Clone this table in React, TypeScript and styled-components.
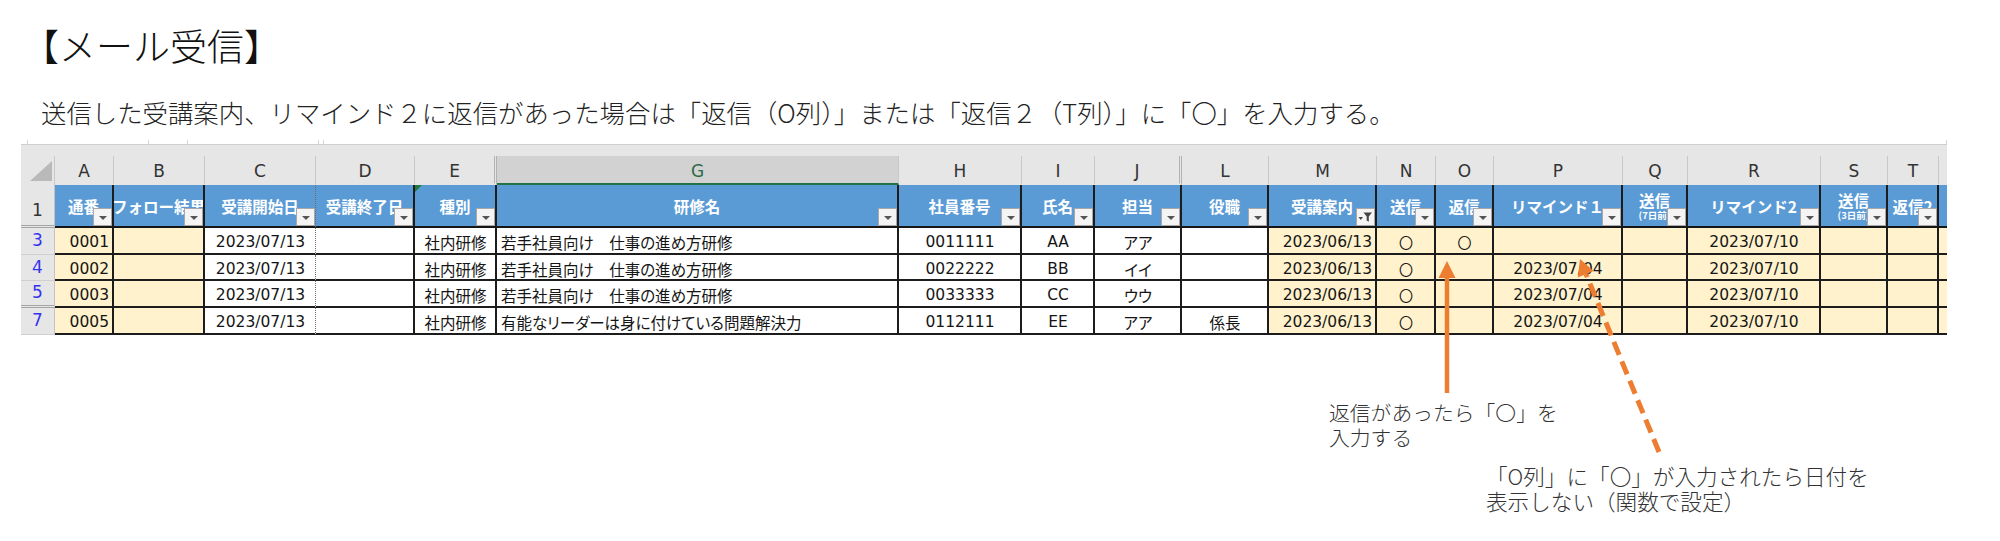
import React from 'react';
import styled, { createGlobalStyle } from 'styled-components';

const GlobalStyle = createGlobalStyle`
  html, body { margin: 0; padding: 0; background: #ffffff; }
  body { font-family: "Noto Sans CJK JP", "Noto Sans", sans-serif; color: #222; }
`;

type Edge = 'solid' | 'dotted' | 'none';
type Fill = 'y' | 'w';
type Align = 'flex-start' | 'center' | 'flex-end';
type Filter = 'plain' | 'active' | 'none';

interface ColDef {
  letter: string;
  width: number;
  title: string;
  sub?: string;
  fill: Fill;
  align: Align;
  edge: Edge;
  hiddenAfter?: boolean;
  filter: Filter;
  mark?: boolean;
  selected?: boolean;
}

const COLUMNS: ColDef[] = [
  { letter: 'A', width: 59, title: '通番', fill: 'y', align: 'flex-end', edge: 'solid', filter: 'plain' },
  { letter: 'B', width: 91, title: 'フォロー結果', fill: 'y', align: 'center', edge: 'solid', filter: 'plain' },
  { letter: 'C', width: 111, title: '受講開始日', fill: 'w', align: 'center', edge: 'dotted', filter: 'plain' },
  { letter: 'D', width: 99, title: '受講終了日', fill: 'w', align: 'center', edge: 'solid', filter: 'plain' },
  { letter: 'E', width: 82, title: '種別', fill: 'w', align: 'center', edge: 'solid', filter: 'plain', hiddenAfter: true, mark: true },
  { letter: 'G', width: 402, title: '研修名', fill: 'w', align: 'flex-start', edge: 'solid', filter: 'plain', selected: true },
  { letter: 'H', width: 123, title: '社員番号', fill: 'w', align: 'center', edge: 'solid', filter: 'plain' },
  { letter: 'I', width: 73, title: '氏名', fill: 'w', align: 'center', edge: 'solid', filter: 'plain' },
  { letter: 'J', width: 87, title: '担当', fill: 'w', align: 'center', edge: 'solid', filter: 'plain', hiddenAfter: true },
  { letter: 'L', width: 87, title: '役職', fill: 'w', align: 'center', edge: 'solid', filter: 'plain' },
  { letter: 'M', width: 108, title: '受講案内', fill: 'y', align: 'flex-end', edge: 'solid', filter: 'active' },
  { letter: 'N', width: 59, title: '送信', fill: 'y', align: 'center', edge: 'solid', filter: 'plain' },
  { letter: 'O', width: 58, title: '返信', fill: 'y', align: 'center', edge: 'solid', filter: 'plain' },
  { letter: 'P', width: 129, title: 'リマインド１', fill: 'y', align: 'center', edge: 'solid', filter: 'plain' },
  { letter: 'Q', width: 65, title: '送信', sub: '(7日前)', fill: 'y', align: 'center', edge: 'solid', filter: 'plain' },
  { letter: 'R', width: 133, title: 'リマインド2', fill: 'y', align: 'center', edge: 'solid', filter: 'plain' },
  { letter: 'S', width: 67, title: '送信', sub: '(3日前)', fill: 'y', align: 'center', edge: 'solid', filter: 'plain' },
  { letter: 'T', width: 51, title: '返信2', fill: 'y', align: 'center', edge: 'solid', filter: 'plain' },
  { letter: '', width: 8, title: '', fill: 'y', align: 'center', edge: 'none', filter: 'none' },
];

const ROWHEAD_W = 34;
const TEMPLATE = [ROWHEAD_W, ...COLUMNS.map((c) => c.width)].map((w) => `${w}px`).join(' ');
const SHEET_W = ROWHEAD_W + COLUMNS.reduce((s, c) => s + c.width, 0);

interface RowDef {
  num: string;
  height: number;
  hiddenBelow?: boolean;
  cells: string[];
}

const G1 = '若手社員向け　仕事の進め方研修';
const ROWS: RowDef[] = [
  { num: '3', height: 28, cells: ['0001', '', '2023/07/13', '', '社内研修', G1, '0011111', 'AA', 'アア', '', '2023/06/13', '〇', '〇', '', '', '2023/07/10', '', '', ''] },
  { num: '4', height: 26, cells: ['0002', '', '2023/07/13', '', '社内研修', G1, '0022222', 'BB', 'イイ', '', '2023/06/13', '〇', '', '2023/07/04', '', '2023/07/10', '', '', ''] },
  { num: '5', height: 27, hiddenBelow: true, cells: ['0003', '', '2023/07/13', '', '社内研修', G1, '0033333', 'CC', 'ウウ', '', '2023/06/13', '〇', '', '2023/07/04', '', '2023/07/10', '', '', ''] },
  { num: '7', height: 27, cells: ['0005', '', '2023/07/13', '', '社内研修', '有能なリーダーは身に付けている問題解決力', '0112111', 'EE', 'アア', '係長', '2023/06/13', '〇', '', '2023/07/04', '', '2023/07/10', '', '', ''] },
];

const edgeCss = (e: Edge) =>
  e === 'solid' ? '2px solid #1c1c1c' : e === 'dotted' ? '1px dotted #6a6a6a' : 'none';

/* ---------- page ---------- */

const Page = styled.div`
  position: relative;
  width: 2000px;
  height: 541px;
  overflow: hidden;
  display: flex;
  flex-direction: column;
  background: #fff;
`;

const Title = styled.h1`
  margin: 27px 0 0 22px;
  font: 300 37px/37px "Noto Sans CJK JP", sans-serif;
  color: #111;
`;

const Lead = styled.p`
  margin: 35px 0 0 41px;
  font: 300 25.4px/26px "Noto Sans CJK JP", sans-serif;
  color: #222;
  white-space: nowrap;
`;

/* ---------- sheet ---------- */

const Sheet = styled.div`
  margin: 15px 0 0 21px;
  width: ${SHEET_W}px;
  height: 195px;
  overflow: hidden;
  display: flex;
  flex-direction: column;
`;

const ToolStrip = styled.div`
  height: 5px;
  display: flex;
  box-sizing: border-box;
  border-bottom: 1px solid #cfcfcf;
`;

const ToolBox = styled.div<{ $w: number; $ml: number }>`
  width: ${(p) => p.$w}px;
  margin-left: ${(p) => p.$ml}px;
  box-sizing: border-box;
  border-left: 1px solid #d2d2d2;
  border-right: 1px solid #d2d2d2;
  background: #fff;
`;

const GrayGap = styled.div`
  height: 12px;
  background: #e6e6e6;
`;

const GridRow = styled.div<{ $h: number }>`
  display: grid;
  grid-template-columns: ${TEMPLATE};
  height: ${(p) => p.$h}px;
`;

const Corner = styled.div`
  position: relative;
  background: #e6e6e6;
  border-right: 1px solid #c8c8c8;
  &::after {
    content: '';
    position: absolute;
    right: 2px;
    bottom: 4px;
    width: 22px;
    height: 20px;
    background: #b9b9b9;
    clip-path: polygon(100% 0, 100% 100%, 0 100%);
  }
`;

const LetterCell = styled.div<{ $sel?: boolean; $hidden?: boolean; $last?: boolean }>`
  box-sizing: border-box;
  display: flex;
  align-items: center;
  justify-content: center;
  background: ${(p) => (p.$sel ? '#d2d2d2' : '#e6e6e6')};
  border-right: ${(p) => (p.$last ? 'none' : p.$hidden ? '3px double #b2b2b2' : '1px solid #c8c8c8')};
  border-bottom: 2px solid ${(p) => (p.$sel ? '#217346' : '#e6e6e6')};
  color: ${(p) => (p.$sel ? '#2a6a47' : '#333')};
  font: 17px "DejaVu Sans", sans-serif;
  padding-top: 2px;
`;

const RowNum = styled.div<{ $head?: boolean; $hiddenBelow?: boolean }>`
  box-sizing: border-box;
  display: flex;
  justify-content: center;
  align-items: ${(p) => (p.$head ? 'flex-end' : 'center')};
  padding-bottom: ${(p) => (p.$head ? '5px' : '2px')};
  background: #e6e6e6;
  border-right: 1px solid #c4c4c4;
  border-bottom: ${(p) => (p.$hiddenBelow || p.$head ? '3px double #a4a4a4' : '1px solid #cfcfcf')};
  color: ${(p) => (p.$head ? '#333' : '#3434ee')};
  font: 17px "DejaVu Sans", sans-serif;
`;

const HeadCell = styled.div<{ $edge: Edge; $mark?: boolean }>`
  position: relative;
  box-sizing: border-box;
  background: #5b9bd5;
  border-right: ${(p) => edgeCss(p.$edge)};
  border-bottom: 2px solid #161616;
  color: #fff;
  display: flex;
  flex-direction: column;
  align-items: center;
  justify-content: center;
  padding-top: 2px;
  white-space: nowrap;
  overflow: hidden;
  font-feature-settings: "palt";
  &::before {
    content: '';
    display: ${(p) => (p.$mark ? 'block' : 'none')};
    position: absolute;
    left: 0;
    top: 0;
    width: 7px;
    height: 7px;
    background: #1f7a3c;
    clip-path: polygon(0 0, 100% 0, 0 100%);
  }
`;

const HeadTitle = styled.span`
  font: 700 15.5px/17px "Noto Sans CJK JP", sans-serif;
`;

const HeadSub = styled.span`
  font: 700 9.5px/11px "Noto Sans CJK JP", sans-serif;
  margin-top: 1px;
`;

const FilterBtn = styled.span<{ $active?: boolean }>`
  position: absolute;
  right: 0;
  bottom: 0;
  width: 19px;
  height: 18px;
  box-sizing: border-box;
  background: #f4f4f4;
  border: 1px solid #a8a8a8;
  display: flex;
  align-items: center;
  justify-content: center;
  &::after {
    content: '';
    display: ${(p) => (p.$active ? 'none' : 'block')};
    margin-top: 2px;
    border-left: 4px solid transparent;
    border-right: 4px solid transparent;
    border-top: 4px solid #555;
  }
`;

const DataCell = styled.div<{ $fill: Fill; $align: Align; $edge: Edge }>`
  box-sizing: border-box;
  background: ${(p) => (p.$fill === 'y' ? '#fff2cc' : '#ffffff')};
  border-right: ${(p) => edgeCss(p.$edge)};
  border-bottom: 2px solid #1c1c1c;
  display: flex;
  align-items: center;
  justify-content: ${(p) => p.$align};
  padding: 3px 3px 0 4px;
  color: #151515;
  font: 15.5px "DejaVu Sans", "Noto Sans CJK JP", sans-serif;
  font-feature-settings: "palt";
  white-space: nowrap;
  overflow: hidden;
`;

const Circle = styled.span`
  font: 14px "Noto Sans CJK JP", sans-serif;
`;

/* ---------- annotations ---------- */

const Overlay = styled.svg`
  position: absolute;
  left: 0;
  top: 0;
  pointer-events: none;
`;

const Note = styled.p<{ $x: number; $y: number; $size: number }>`
  position: absolute;
  left: ${(p) => p.$x}px;
  top: ${(p) => p.$y}px;
  margin: 0;
  font: 300 ${(p) => p.$size}px/25px "Noto Sans CJK JP", sans-serif;
  color: #333;
  white-space: nowrap;
`;

const FunnelIcon = () => (
  <svg width="15" height="12" viewBox="0 0 15 12">
    <path d="M0.5 6 L5 6 L2.75 9 Z" fill="#444" />
    <path d="M5.5 1.5 H14 L10.8 5.6 V10.8 L8.7 9.6 V5.6 Z" fill="#444" />
  </svg>
);

export default function App() {
  return (
    <>
      <GlobalStyle />
      <Page>
        <Title>【メール受信】</Title>
        <Lead>送信した受講案内、リマインド２に返信があった場合は「返信（O列）」または「返信２（T列）」に「〇」を入力する。</Lead>
        <Sheet>
          <ToolStrip>
            <ToolBox $w={122} $ml={6} />
            <ToolBox $w={132} $ml={38} />
            <ToolBox $w={1625} $ml={4} />
          </ToolStrip>
          <GrayGap />
          <GridRow $h={30}>
            <Corner />
            {COLUMNS.map((c, i) => (
              <LetterCell key={i} $sel={c.selected} $hidden={c.hiddenAfter} $last={i === COLUMNS.length - 1}>
                {c.letter}
              </LetterCell>
            ))}
          </GridRow>
          <GridRow $h={45}>
            <RowNum $head>1</RowNum>
            {COLUMNS.map((c, i) => (
              <HeadCell key={i} $edge={c.edge} $mark={c.mark}>
                {c.title && <HeadTitle>{c.title}</HeadTitle>}
                {c.sub && <HeadSub>{c.sub}</HeadSub>}
                {c.filter !== 'none' && (
                  <FilterBtn $active={c.filter === 'active'}>{c.filter === 'active' && <FunnelIcon />}</FilterBtn>
                )}
              </HeadCell>
            ))}
          </GridRow>
          {ROWS.map((r) => (
            <GridRow key={r.num} $h={r.height}>
              <RowNum $hiddenBelow={r.hiddenBelow}>{r.num}</RowNum>
              {COLUMNS.map((c, i) => (
                <DataCell key={i} $fill={c.fill} $align={c.align} $edge={c.edge}>
                  {r.cells[i] === '〇' ? <Circle>〇</Circle> : r.cells[i] ?? ''}
                </DataCell>
              ))}
            </GridRow>
          ))}
        </Sheet>

        <Note $x={1329} $y={400} $size={20.8}>
          返信があったら「〇」を
          <br />
          入力する
        </Note>
        <Note $x={1486} $y={463} $size={21.6}>
          「O列」に「〇」が入力されたら日付を
          <br />
          表示しない（関数で設定）
        </Note>

        <Overlay width={2000} height={541} viewBox="0 0 2000 541">
          <line x1={1447} y1={393} x2={1447} y2={274} stroke="#ed7d31" strokeWidth={4.5} />
          <polygon points="1447,261 1455.5,278 1438.5,278" fill="#ed7d31" />
          <line x1={1659} y1={452} x2={1586} y2={274} stroke="#ed7d31" strokeWidth={5} strokeDasharray="14 7" />
          <polygon points="1580,259 1593.6,271 1577.8,277.5" fill="#ed7d31" />
        </Overlay>
      </Page>
    </>
  );
}
